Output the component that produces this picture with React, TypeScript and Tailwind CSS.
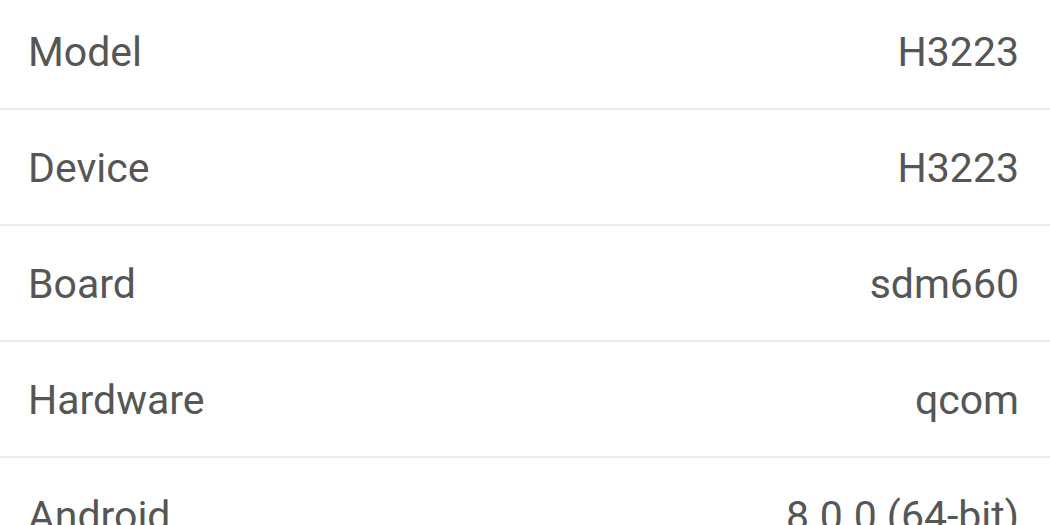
import React from 'react';

interface InfoRow {
  label: string;
  value: string;
}

const rows: InfoRow[] = [
  { label: 'Model', value: 'H3223' },
  { label: 'Device', value: 'H3223' },
  { label: 'Board', value: 'sdm660' },
  { label: 'Hardware', value: 'qcom' },
  { label: 'Android', value: '8.0.0 (64-bit)' },
];

export default function App() {
  return (
    <div
      className="w-[1050px] h-[525px] overflow-hidden bg-white text-[#565656]"
      style={{ fontFamily: 'Roboto, "Noto Sans", sans-serif' }}
    >
      {rows.map((row, idx) => (
        <div
          key={row.label}
          className={`flex justify-between items-center pl-[28px] pr-[31px] pb-[31px] border-b-2 border-[#ebebeb] text-[41px] leading-[49px]
            ${idx === 0 ? 'pt-[28px]' : 'pt-[34px]'}`}
        >
          <span>{row.label}</span>
          <span>{row.value}</span>
        </div>
      ))}
    </div>
  );
}
